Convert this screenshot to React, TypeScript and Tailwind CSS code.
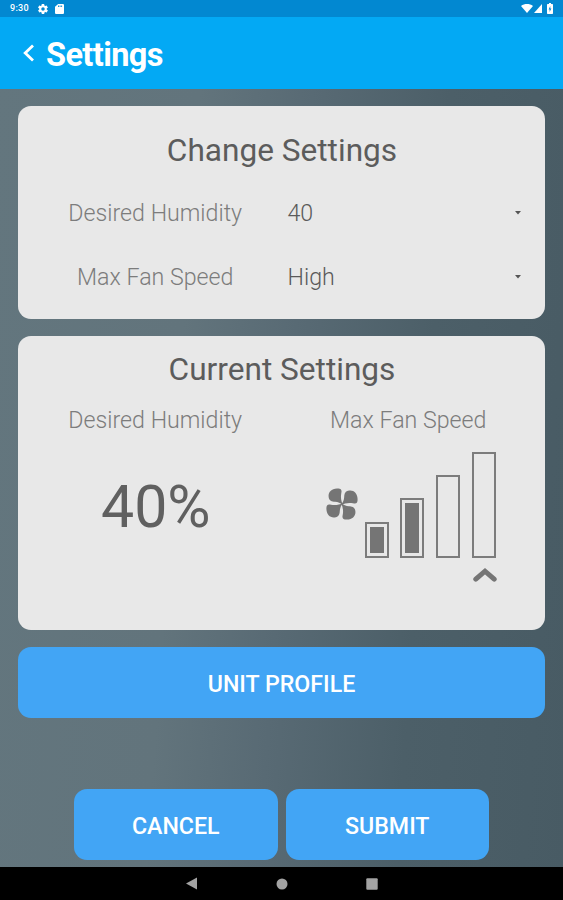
import type { ReactNode } from "react";

function StatusBar() {
  return (
    <div className="flex h-[17px] items-center bg-[#0288d1] pl-[10px] pr-[10px] text-white">
      <span className="w-[20px] whitespace-nowrap text-[9px] font-medium leading-[17px] tracking-[0.3px]">9:30</span>
      <svg className="ml-[7px] mt-px" width="12" height="12" viewBox="0 0 24 24" fill="currentColor">
        <path d="M19.4 13c.1-.3.1-.7.1-1s0-.7-.1-1l2.1-1.600c.2-.2.2-.4.1-.6l-2-3.500c-.1-.2-.4-.3-.6-.2l-2.500 1c-.5-.4-1.100-.7-1.700-1l-.4-2.600c0-.3-.2-.5-.5-.5h-4c-.3 0-.5.2-.5.5L9 5.100c-.6.300-1.200.6-1.700 1l-2.500-1c-.2-.1-.5 0-.6.2l-2 3.500c-.1.2-.1.500.1.600L4.500 11c0 .3-.1.700-.1 1s0 .700.1 1l-2.100 1.600c-.2.200-.2.400-.1.600l2 3.500c.1.200.4.300.6.200l2.500-1c.5.400 1.100.700 1.700 1l.4 2.600c0 .300.2.500.5.500h4c.3 0 .5-.2.5-.5l.4-2.600c.6-.3 1.200-.6 1.700-1l2.500 1c.2.100.5 0 .6-.2l2-3.500c.1-.2.1-.5-.1-.6zM12 15.500a3.500 3.500 0 1 1 0-7 3.500 3.500 0 0 1 0 7z" />
      </svg>
      <svg className="ml-[6px]" width="9" height="10" viewBox="0 0 8 10" fill="currentColor" preserveAspectRatio="none">
        <path fillRule="evenodd" d="M2.800 0H7a1 1 0 0 1 1 1v8a1 1 0 0 1-1 1H1a1 1 0 0 1-1-1V2.800zM2.700 1.600v1.500h.8V1.600zm1.400 0v1.500h.8V1.600zm1.400 0v1.500h.8V1.600z" />
      </svg>
      <div className="ml-auto flex items-center">
        <svg width="12" height="9" viewBox="0 0 12 9" fill="currentColor">
          <path d="M0 2C3.500-.600 8.500-.600 12 2L6 9z" />
        </svg>
        <svg className="ml-px" width="8" height="9" viewBox="0 0 8 9" fill="currentColor">
          <path d="M8 0v9H0z" />
        </svg>
        <svg className="ml-[5px]" width="6" height="11" viewBox="0 0 6 11" fill="currentColor">
          <path fillRule="evenodd" d="M2 0h2v1h1.300q.7 0 .7.700v8.600q0 .7-.7.700H.7q-.7 0-.7-.7V1.700Q0 1 .7 1H2zM3.300 3L1.600 6.500h1V9l1.800-3.500H3.300z" />
        </svg>
      </div>
    </div>
  );
}

function Header() {
  return (
    <header className="flex h-[72px] items-center bg-[#03a9f4] pl-[23px] text-white">
      <svg width="12" height="18" viewBox="0 0 12 18" fill="none" stroke="currentColor" strokeWidth="2.800">
        <path d="M10 1.500L2.200 9l7.800 7.500" />
      </svg>
      <h1 className="ml-[11px] mt-[4px] text-[32.500px] font-bold leading-[40px] tracking-[-0.6px]">Settings</h1>
    </header>
  );
}

function SelectRow({ label, value }: { label: string; value: string }) {
  return (
    <div className="grid h-[64px] grid-cols-2 items-center text-[23.200px] font-light">
      <span className="pl-px text-center text-[#7c7c7c]">{label}</span>
      <div className="flex items-center justify-between pl-[6px] pr-[13px] text-[#5a5a5a]">
        <span>{value}</span>
        <svg width="8" height="4" viewBox="0 0 8 4" fill="#555">
          <path d="M1 0h6L4 3.600z" />
        </svg>
      </div>
    </div>
  );
}

function FanIcon() {
  const petal = "M1 1C-1-3-1.500-7-.7-11C.2-14.500-1.300-15.700-5-15.600C-10.500-15.400-13.800-12-13.400-7.500C-13.200-3-10-2.400-7-2.200C-4-2-1.500-1 1 1Z";
  return (
    <svg width="32" height="32" viewBox="-16 -16 32 32" fill="#757575">
      <path d={petal} />
      <path d={petal} transform="rotate(90)" />
      <path d={petal} transform="rotate(180)" />
      <path d={petal} transform="rotate(270)" />
    </svg>
  );
}

function Bar({ height, filled }: { height: number; filled?: boolean }) {
  return (
    <div className="w-[24px] border-2 border-[#7c7c7c] p-[3px]" style={{ height }}>
      {filled && <div className="h-full w-full bg-[#757575]" />}
    </div>
  );
}

function ActionButton({ className, children }: { className: string; children: ReactNode }) {
  return (
    <button
      className={`flex h-[71px] items-center justify-center rounded-[13px] bg-[#42a5f5] pt-[3px] text-[23.200px] font-medium text-white ${className}`}
    >
      {children}
    </button>
  );
}

export default function App() {
  return (
    <div className="flex h-[900px] w-[563px] flex-col overflow-hidden bg-[linear-gradient(94deg,#63767e_0%,#62747c_33%,#586a74_51%,#4c5f68_73%,#485b64_100%)] font-['Roboto',sans-serif]">
      <StatusBar />
      <Header />
      <main className="flex flex-1 flex-col px-[18px] pt-[17px]">
        <section className="h-[212.500px] rounded-[13px] bg-[#e8e8e8] px-[10px] pt-[13px]">
          <h2 className="h-[62px] pl-px pt-px text-center text-[31.600px] leading-[62px] text-[#5c5c5c]">Change Settings</h2>
          <SelectRow label="Desired Humidity" value="40" />
          <SelectRow label="Max Fan Speed" value="High" />
        </section>

        <section className="mt-[17.500px] h-[294px] rounded-[13px] bg-[#e8e8e8] px-[10px] pt-[8px]">
          <h2 className="h-[50px] pl-px pt-px text-center text-[31.600px] leading-[50px] text-[#5c5c5c]">Current Settings</h2>
          <div className="grid grid-cols-2">
            <div className="text-center">
              <h3 className="h-[52px] pl-px text-[23.200px] font-light leading-[52px] text-[#7c7c7c]">Desired Humidity</h3>
              <p className="mt-[26px] pl-[2px] text-[59px] leading-[70px] text-[#606060]">40%</p>
            </div>
            <div>
              <h3 className="h-[52px] text-center text-[23.200px] font-light leading-[52px] text-[#7c7c7c]">Max Fan Speed</h3>
              <div className="flex pl-[44.500px] pt-[6px]">
                <div className="mt-[36px]">
                  <FanIcon />
                </div>
                <div className="ml-[6.500px]">
                  <div className="flex h-[106px] items-end gap-[11.700px]">
                    <Bar height={36} filled />
                    <Bar height={60} filled />
                    <Bar height={83} />
                    <Bar height={106} />
                  </div>
                  <svg className="ml-[108px] mt-[8.500px]" width="24" height="16" viewBox="0 0 24 16" fill="none" stroke="#757575" strokeWidth="5" strokeLinecap="round" strokeLinejoin="miter">
                    <path d="M2.800 12.200L12 4.200L21.200 12.200" />
                  </svg>
                </div>
              </div>
            </div>
          </div>
        </section>

        <ActionButton className="mt-[17.400px]">UNIT PROFILE</ActionButton>
        <div className="mt-[71px] flex justify-center gap-[8px]">
          <ActionButton className="w-[203.500px]">CANCEL</ActionButton>
          <ActionButton className="w-[203.500px]">SUBMIT</ActionButton>
        </div>
      </main>
      <nav className="flex h-[33px] items-center justify-center gap-[78px] bg-black">
        <svg width="12" height="13" viewBox="0 0 12 13" fill="#a3a3a3">
          <path d="M11 .5v12L0 6.500z" />
        </svg>
        <svg width="12" height="12" viewBox="0 0 12 12" fill="#a3a3a3">
          <circle cx="6" cy="6" r="5.500" />
        </svg>
        <svg width="12" height="12" viewBox="0 0 12 12" fill="#a3a3a3">
          <rect x=".3" y=".3" width="11.400" height="11.400" rx="1" />
        </svg>
      </nav>
    </div>
  );
}
